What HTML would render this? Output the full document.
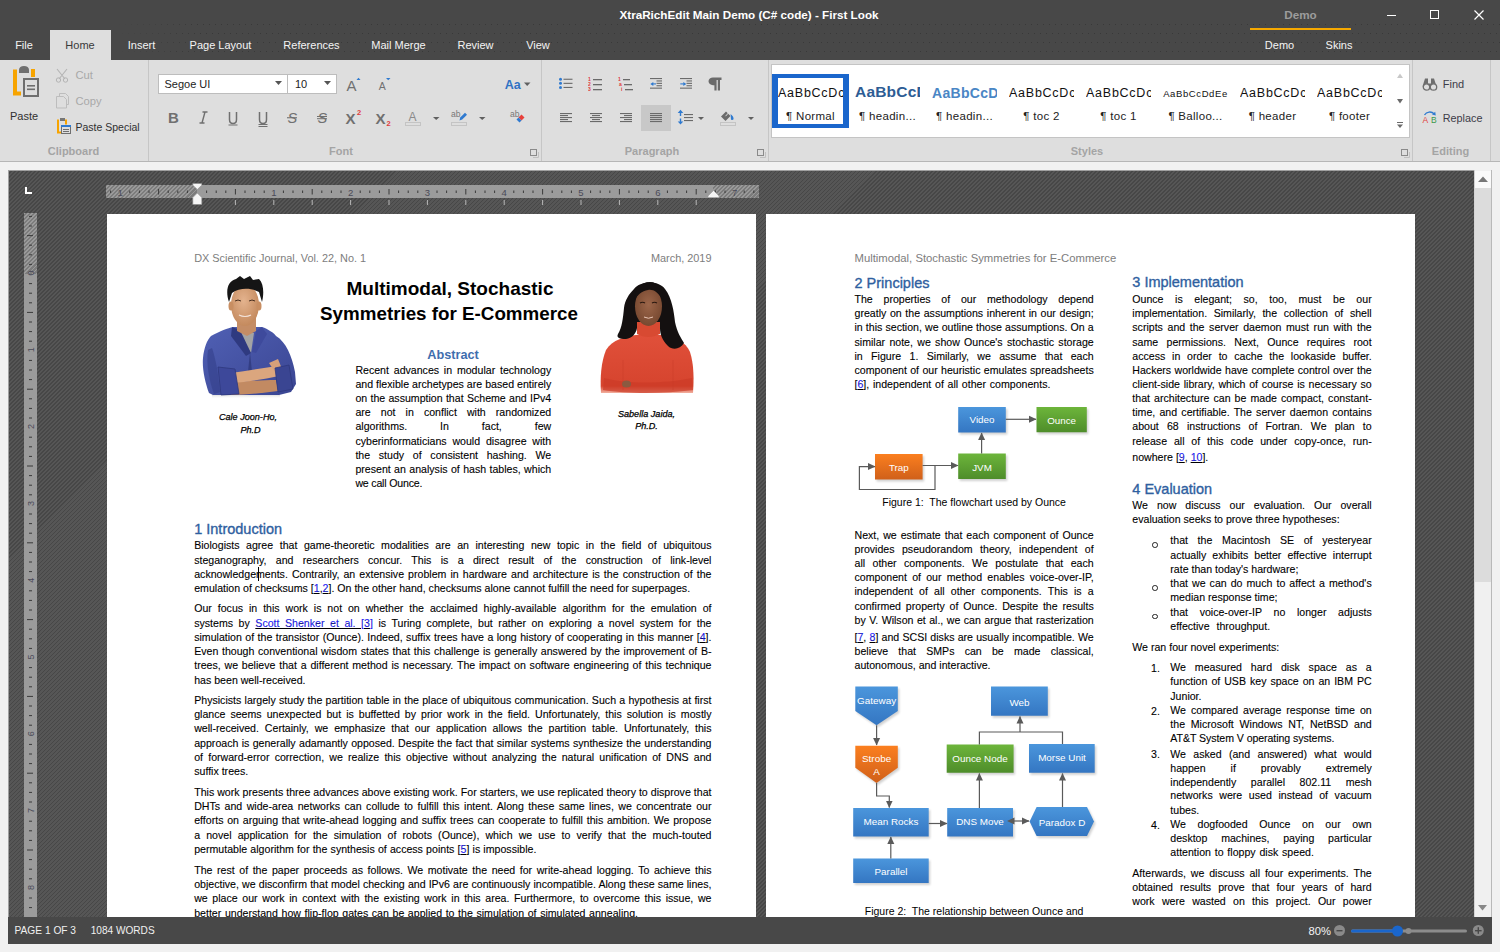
<!DOCTYPE html>
<html><head><meta charset="utf-8"><style>
    html,body{margin:0;padding:0;width:1500px;height:952px;overflow:hidden;background:#f1f1f1}
    .abs{position:absolute}
    .t{font-family:"Liberation Sans",sans-serif;white-space:nowrap}
    .d{white-space:nowrap;-webkit-text-stroke:0.1px #000}
    .lk{color:#1a1aff;text-decoration:underline}
    text{font-family:"Liberation Sans",sans-serif}
    </style></head><body>
<div class="abs" style="left:0;top:0;width:1500px;height:60px;background:#484848"></div>
<div class="abs t" style="left:0.00px;top:9.10px;font-size:11.7px;line-height:11.7px;color:#fff;font-weight:bold;width:1498.00px;text-align:center;">XtraRichEdit Main Demo (C# code) - First Look</div>
<div class="abs t" style="left:1250.00px;top:9.10px;font-size:11.7px;line-height:11.7px;color:#9c9c9c;font-weight:bold;width:101.00px;text-align:center;">Demo</div>
<div class="abs" style="left:1250px;top:28px;width:101px;height:2px;background:#f5a800"></div>
<div class="abs" style="left:1387px;top:15px;width:9px;height:1px;background:#fff"></div>
<div class="abs" style="left:1430px;top:10px;width:7px;height:7px;border:1px solid #fff"></div>
<svg class="abs" style="left:1474px;top:10px" width="10" height="10"><path d="M0.5 0.5L9.5 9.5M9.5 0.5L0.5 9.5" stroke="#fff" stroke-width="1.2"/></svg>
<svg class="abs" style="left:0;top:0" width="1500" height="60"><defs><pattern id="dots" x="2" y="15" width="6" height="18" patternUnits="userSpaceOnUse"><rect x="0" y="0" width="1" height="1" fill="#393939"/><rect x="3" y="9" width="1" height="1" fill="#393939"/></pattern><linearGradient id="dfade" x1="0" y1="0" x2="1" y2="0"><stop offset="0" stop-color="#fff" stop-opacity="0"/><stop offset="0.06" stop-color="#fff" stop-opacity="1"/></linearGradient><mask id="dmask"><rect x="115" y="24" width="1385" height="36" fill="url(#dfade)"/></mask></defs><rect x="115" y="24" width="1385" height="36" fill="url(#dots)" mask="url(#dmask)"/></svg>
<div class="abs" style="left:50px;top:30px;width:61px;height:31px;background:#dedede"></div>
<div class="abs t" style="left:-36.00px;top:40.19px;font-size:11px;line-height:11px;color:#f4f4f4;width:120.00px;text-align:center;">File</div>
<div class="abs t" style="left:20.00px;top:40.19px;font-size:11px;line-height:11px;color:#3a3a3a;width:120.00px;text-align:center;">Home</div>
<div class="abs t" style="left:81.50px;top:40.19px;font-size:11px;line-height:11px;color:#f4f4f4;width:120.00px;text-align:center;">Insert</div>
<div class="abs t" style="left:160.50px;top:40.19px;font-size:11px;line-height:11px;color:#f4f4f4;width:120.00px;text-align:center;">Page Layout</div>
<div class="abs t" style="left:251.50px;top:40.19px;font-size:11px;line-height:11px;color:#f4f4f4;width:120.00px;text-align:center;">References</div>
<div class="abs t" style="left:338.50px;top:40.19px;font-size:11px;line-height:11px;color:#f4f4f4;width:120.00px;text-align:center;">Mail Merge</div>
<div class="abs t" style="left:415.50px;top:40.19px;font-size:11px;line-height:11px;color:#f4f4f4;width:120.00px;text-align:center;">Review</div>
<div class="abs t" style="left:478.00px;top:40.19px;font-size:11px;line-height:11px;color:#f4f4f4;width:120.00px;text-align:center;">View</div>
<div class="abs t" style="left:1219.50px;top:40.19px;font-size:11px;line-height:11px;color:#f4f4f4;width:120.00px;text-align:center;">Demo</div>
<div class="abs t" style="left:1279.00px;top:40.19px;font-size:11px;line-height:11px;color:#f4f4f4;width:120.00px;text-align:center;">Skins</div>
<div class="abs" style="left:0;top:60px;width:1500px;height:101px;background:#dedede;border-bottom:1px solid #b6b6b6"></div>
<div class="abs" style="left:148px;top:60px;width:1px;height:101px;background:#c6c6c6"></div>
<div class="abs" style="left:541px;top:60px;width:1px;height:101px;background:#c6c6c6"></div>
<div class="abs" style="left:768px;top:60px;width:1px;height:101px;background:#c6c6c6"></div>
<div class="abs" style="left:1412px;top:60px;width:1px;height:101px;background:#c6c6c6"></div>
<div class="abs" style="left:1490px;top:60px;width:1px;height:101px;background:#c6c6c6"></div>
<div class="abs t" style="left:13.50px;top:145.69px;font-size:11px;line-height:11px;color:#a4a4a4;font-weight:bold;width:120.00px;text-align:center;">Clipboard</div>
<div class="abs t" style="left:281.00px;top:145.69px;font-size:11px;line-height:11px;color:#a4a4a4;font-weight:bold;width:120.00px;text-align:center;">Font</div>
<div class="abs t" style="left:592.00px;top:145.69px;font-size:11px;line-height:11px;color:#a4a4a4;font-weight:bold;width:120.00px;text-align:center;">Paragraph</div>
<div class="abs t" style="left:1027.00px;top:145.69px;font-size:11px;line-height:11px;color:#a4a4a4;font-weight:bold;width:120.00px;text-align:center;">Styles</div>
<div class="abs t" style="left:1390.50px;top:145.69px;font-size:11px;line-height:11px;color:#a4a4a4;font-weight:bold;width:120.00px;text-align:center;">Editing</div>
<svg class="abs" style="left:530px;top:148.5px" width="9" height="9"><rect x="0.5" y="0.5" width="6" height="6" fill="none" stroke="#8a8a8a"/><path d="M8.5 3V8.5H3" fill="none" stroke="#c0c0c0"/></svg>
<svg class="abs" style="left:757px;top:148.5px" width="9" height="9"><rect x="0.5" y="0.5" width="6" height="6" fill="none" stroke="#8a8a8a"/><path d="M8.5 3V8.5H3" fill="none" stroke="#c0c0c0"/></svg>
<svg class="abs" style="left:1401px;top:148.5px" width="9" height="9"><rect x="0.5" y="0.5" width="6" height="6" fill="none" stroke="#8a8a8a"/><path d="M8.5 3V8.5H3" fill="none" stroke="#c0c0c0"/></svg>
<svg class="abs" style="left:10px;top:64px" width="32" height="36">
      <path d="M3 5.5h4v22h4v4H3z" fill="#f7a400"/>
      <rect x="21" y="5" width="4" height="8" fill="#f7a400"/>
      <path d="M9 9V6C9 3.5 11 2 14 2C17 2 19 3.5 19 6V9z" fill="#6f6f6f"/>
      <rect x="14" y="15" width="14" height="17" fill="none" stroke="#6f6f6f" stroke-width="2"/>
      <rect x="17" y="21" width="8" height="1.6" fill="#6f6f6f"/><rect x="17" y="24.5" width="8" height="1.6" fill="#6f6f6f"/>
    </svg>
<div class="abs t" style="left:0.00px;top:111.19px;font-size:11px;line-height:11px;color:#303030;width:48.00px;text-align:center;">Paste</div>
<svg class="abs" style="left:55px;top:68px" width="15" height="15">
      <path d="M2 1L10 11M12 1L4 11" stroke="#b4b4b4" stroke-width="1.1" fill="none"/>
      <circle cx="3.5" cy="12" r="2.2" fill="none" stroke="#b4b4b4"/><circle cx="10.5" cy="12" r="2.2" fill="none" stroke="#b4b4b4"/></svg>
<div class="abs t" style="left:75.50px;top:69.52px;font-size:11.2px;line-height:11.2px;color:#a9a9a9;">Cut</div>
<svg class="abs" style="left:55px;top:92px" width="15" height="17">
      <path d="M1.5 4.5h7l3 3v8.5h-10z" fill="none" stroke="#bdbdbd"/><path d="M4.5 4.5v-3h6l3 3v8h-2" fill="none" stroke="#bdbdbd"/></svg>
<div class="abs t" style="left:75.50px;top:95.52px;font-size:11.2px;line-height:11.2px;color:#a9a9a9;">Copy</div>
<svg class="abs" style="left:56px;top:118px" width="16" height="17">
      <path d="M1 1.5h2v12h3v2H1z" fill="#f7a400"/><rect x="9" y="1.5" width="2" height="5" fill="#f7a400"/>
      <rect x="4" y="0" width="5" height="3" fill="#777"/>
      <rect x="5.5" y="7.5" width="9" height="8" fill="none" stroke="#6f6f6f"/><rect x="5" y="7" width="10" height="2" fill="#2f7ad0"/>
      <rect x="7" y="11" width="6" height="1" fill="#6f6f6f"/><rect x="7" y="13" width="6" height="1" fill="#6f6f6f"/></svg>
<div class="abs t" style="left:75.50px;top:121.81px;font-size:10.5px;line-height:10.5px;color:#303030;">Paste Special</div>
<div class="abs" style="left:158px;top:74px;width:128px;height:18px;background:#fff;border:1px solid #bdbdbd"></div>
<div class="abs" style="left:287px;top:74px;width:48px;height:18px;background:#fff;border:1px solid #bdbdbd"></div>
<div class="abs t" style="left:164.50px;top:78.69px;font-size:11px;line-height:11px;color:#222;">Segoe UI</div>
<div class="abs t" style="left:295.00px;top:78.69px;font-size:11px;line-height:11px;color:#222;">10</div>
<svg class="abs" style="left:275px;top:81px" width="8" height="5"><path d="M0 0h7l-3.5 4z" fill="#555"/></svg>
<svg class="abs" style="left:324px;top:81px" width="8" height="5"><path d="M0 0h7l-3.5 4z" fill="#555"/></svg>
<svg class="abs" style="left:0;top:0" width="545" height="135">
      <text x="346.5" y="90.5" font-size="15" fill="#707070" font-family="Liberation Sans">A</text>
      <path d="M356.5 80L358.5 77.8L360.5 80z" fill="#2f7ad0"/>
      <text x="378.8" y="90.3" font-size="10.5" fill="#707070" font-family="Liberation Sans">A</text>
      <path d="M386 78H390.5L388.2 80.2z" fill="#2f7ad0"/>
      <text x="504.8" y="88.5" font-size="12.5" font-weight="bold" fill="#2f72c4" font-family="Liberation Sans">Aa</text>
      <path d="M524 82.5H530.5L527.2 86z" fill="#606060"/>
    </svg>
<svg class="abs" style="left:160px;top:105px" width="180" height="25">
      <text x="8" y="18" font-size="15" font-weight="bold" fill="#707070" font-family="Liberation Sans">B</text>
      <path d="M42.5 7H47.5M39.5 18H44.5M45 7L42 18" stroke="#707070" stroke-width="1.4" fill="none"/>
      <path d="M69.5 7V14.5C69.5 17.5 71 18.5 73 18.5C75 18.5 76.5 17.5 76.5 14.5V7" stroke="#707070" stroke-width="1.5" fill="none"/>
      <rect x="68.5" y="19.5" width="9" height="1" fill="#707070"/>
      <path d="M99.5 7V14.5C99.5 17.5 101 18.5 103 18.5C105 18.5 106.5 17.5 106.5 14.5V7" stroke="#707070" stroke-width="1.5" fill="none"/>
      <rect x="98.5" y="19" width="9" height="1" fill="#707070"/><rect x="98.5" y="21" width="9" height="1" fill="#707070"/>
      <text x="127.5" y="18" font-size="14.5" fill="#707070" font-family="Liberation Sans" font-style="italic">S</text>
      <rect x="127" y="12.2" width="10" height="1.1" fill="#707070"/>
      <text x="157.5" y="18" font-size="14.5" fill="#707070" font-family="Liberation Sans" font-style="italic">S</text>
      <rect x="157" y="11" width="10" height="1" fill="#707070"/><rect x="157" y="13.2" width="10" height="1" fill="#707070"/>
    </svg>
<svg class="abs" style="left:0;top:0" width="545" height="135">
      <text x="345.5" y="123.5" font-size="15" font-weight="bold" fill="#707070" font-family="Liberation Sans">X</text>
      <text x="357" y="115.3" font-size="7.5" font-weight="bold" fill="#e03a3a" font-family="Liberation Sans">2</text>
      <text x="375.5" y="123.5" font-size="15" font-weight="bold" fill="#707070" font-family="Liberation Sans">X</text>
      <text x="386.5" y="126.3" font-size="7.5" font-weight="bold" fill="#e03a3a" font-family="Liberation Sans">2</text>
      <text x="408.5" y="121" font-size="12" fill="#8a8a8a" font-family="Liberation Sans">A</text>
      <rect x="405.5" y="122.5" width="15" height="3" fill="none" stroke="#c4c4c4"/>
      <path d="M433 117H439.5L436.2 120z" fill="#606060"/>
      <text x="451" y="116.5" font-size="8.5" fill="#777" font-family="Liberation Sans">ab</text>
      <path d="M459.5 120.5L460.2 117.5L465 112.7L467 114.7L462.2 119.5z" fill="#2f7ad0"/>
      <rect x="451.5" y="122.5" width="15" height="3" fill="none" stroke="#c4c4c4"/>
      <path d="M479 117H485.5L482.2 120z" fill="#606060"/>
      <text x="510" y="116.5" font-size="8.5" fill="#777" font-family="Liberation Sans">ab</text>
      <path d="M521.5 114.5L524.5 117.5L521.5 120.5L518.5 117.5z" fill="#e8403a"/>
      <path d="M518.5 117.5L521.5 120.5L519.5 122.5L516.5 119.5z" fill="#2f7ad0"/>
    </svg>
<svg class="abs" style="left:558px;top:77px" width="16" height="14">
      <circle cx="2.5" cy="2.2" r="1.5" fill="#2f7ad0"/><circle cx="2.5" cy="6.3" r="1.5" fill="#2f7ad0"/><circle cx="2.5" cy="10.4" r="1.5" fill="#2f7ad0"/>
      <rect x="5.5" y="1.7" width="9" height="1.1" fill="#6a6a6a"/><rect x="5.5" y="5.8" width="9" height="1.1" fill="#6a6a6a"/><rect x="5.5" y="9.9" width="9" height="1.1" fill="#6a6a6a"/></svg>
<svg class="abs" style="left:588px;top:76px" width="16" height="15">
      <text x="0" y="5" font-size="5" font-weight="bold" fill="#e03a3a" font-family="Liberation Sans">1</text><text x="0" y="10" font-size="5" font-weight="bold" fill="#e03a3a" font-family="Liberation Sans">2</text><text x="0" y="15" font-size="5" font-weight="bold" fill="#e03a3a" font-family="Liberation Sans">3</text>
      <rect x="5" y="3" width="9" height="1.3" fill="#6a6a6a"/><rect x="5" y="8" width="9" height="1.3" fill="#6a6a6a"/><rect x="5" y="13" width="9" height="1.3" fill="#6a6a6a"/></svg>
<svg class="abs" style="left:618px;top:76px" width="16" height="15">
      <text x="0" y="5" font-size="5" font-weight="bold" fill="#e03a3a" font-family="Liberation Sans">1</text><text x="1" y="10" font-size="5" font-weight="bold" fill="#e03a3a" font-family="Liberation Sans">a</text><text x="3" y="15" font-size="5" font-weight="bold" fill="#e03a3a" font-family="Liberation Sans">i</text>
      <rect x="5" y="3" width="7" height="1.3" fill="#6a6a6a"/><rect x="6" y="8" width="8" height="1.3" fill="#6a6a6a"/><rect x="7" y="13" width="8" height="1.3" fill="#6a6a6a"/></svg>
<svg class="abs" style="left:650px;top:78px" width="13" height="12">
          <rect x="0" y="0" width="12" height="1.1" fill="#6a6a6a"/><rect x="6.5" y="2.4" width="5.5" height="1.1" fill="#6a6a6a"/><rect x="6.5" y="4.8" width="5.5" height="1.1" fill="#6a6a6a"/><rect x="6.5" y="7.2" width="5.5" height="1.1" fill="#6a6a6a"/><rect x="0" y="9.6" width="12" height="1.1" fill="#6a6a6a"/><path d="M0.3 5.9L3.3 3.9V7.9z" fill="#2f7ad0"/><rect x="2.5" y="5.35" width="3.5" height="1.1" fill="#2f7ad0"/></svg>
<svg class="abs" style="left:680px;top:78px" width="13" height="12">
          <rect x="0" y="0" width="12" height="1.1" fill="#6a6a6a"/><rect x="6.5" y="2.4" width="5.5" height="1.1" fill="#6a6a6a"/><rect x="6.5" y="4.8" width="5.5" height="1.1" fill="#6a6a6a"/><rect x="6.5" y="7.2" width="5.5" height="1.1" fill="#6a6a6a"/><rect x="0" y="9.6" width="12" height="1.1" fill="#6a6a6a"/><path d="M6.3 5.9L3.3 3.9V7.9z" fill="#2f7ad0"/><rect x="0.3" y="5.35" width="3.5" height="1.1" fill="#2f7ad0"/></svg>
<svg class="abs" style="left:708px;top:77px" width="14" height="14"><path d="M5 0.5H13.5V3H12V13.5H9.8V3H8.6V13.5H6.4V8.2H5C2.6 8.2 0.5 6.6 0.5 4.3C0.5 2 2.6 0.5 5 0.5z" fill="#6a6a6a"/></svg>
<div class="abs" style="left:641px;top:105px;width:30px;height:26px;background:#c8c8c8"></div>
<svg class="abs" style="left:560px;top:113px" width="13" height="10"><rect x="0" y="0" width="12" height="1.1" fill="#6a6a6a"/><rect x="0" y="2" width="8" height="1.1" fill="#6a6a6a"/><rect x="0" y="4" width="12" height="1.1" fill="#6a6a6a"/><rect x="0" y="6" width="8" height="1.1" fill="#6a6a6a"/><rect x="0" y="8" width="12" height="1.1" fill="#6a6a6a"/></svg>
<svg class="abs" style="left:590px;top:113px" width="13" height="10"><rect x="0.0" y="0" width="12" height="1.1" fill="#6a6a6a"/><rect x="2.0" y="2" width="8" height="1.1" fill="#6a6a6a"/><rect x="0.0" y="4" width="12" height="1.1" fill="#6a6a6a"/><rect x="2.0" y="6" width="8" height="1.1" fill="#6a6a6a"/><rect x="0.0" y="8" width="12" height="1.1" fill="#6a6a6a"/></svg>
<svg class="abs" style="left:620px;top:113px" width="13" height="10"><rect x="0" y="0" width="12" height="1.1" fill="#6a6a6a"/><rect x="4" y="2" width="8" height="1.1" fill="#6a6a6a"/><rect x="0" y="4" width="12" height="1.1" fill="#6a6a6a"/><rect x="4" y="6" width="8" height="1.1" fill="#6a6a6a"/><rect x="0" y="8" width="12" height="1.1" fill="#6a6a6a"/></svg>
<svg class="abs" style="left:650px;top:113px" width="13" height="10"><rect x="0" y="0" width="12" height="1.1" fill="#6a6a6a"/><rect x="0" y="2" width="12" height="1.1" fill="#6a6a6a"/><rect x="0" y="4" width="12" height="1.1" fill="#6a6a6a"/><rect x="0" y="6" width="12" height="1.1" fill="#6a6a6a"/><rect x="0" y="8" width="12" height="1.1" fill="#6a6a6a"/></svg>
<svg class="abs" style="left:0;top:0" width="770" height="135">
      <path d="M680.5 109.8L683.3 113H681.2V116H679.8V113H677.7z" fill="#2f7ad0"/>
      <path d="M680.5 124.6L683.3 121.4H681.2V118.4H679.8V121.4H677.7z" fill="#2f7ad0"/>
      <rect x="684" y="114" width="9" height="1.1" fill="#6a6a6a"/><rect x="684" y="117" width="9" height="1.1" fill="#6a6a6a"/><rect x="684" y="120" width="9" height="1.1" fill="#6a6a6a"/>
      <path d="M698 117H704L701 120z" fill="#606060"/>
      <path d="M721 116.5L726 111.5L730.5 116L725.5 121z" fill="#6a6a6a"/>
      <path d="M725.5 116.2L729.5 111.8" stroke="#dedede" stroke-width="1"/>
      <path d="M730.5 114C732.5 115.5 734 117.5 733.5 119.3C733 120.3 731.3 120.3 731 119.2C730.7 117.8 731 116 730.5 114z" fill="#2f7ad0"/>
      <rect x="720.5" y="122.5" width="15" height="3" fill="none" stroke="#c4c4c4"/>
      <path d="M748 117H754L751 120z" fill="#606060"/>
    </svg>
<div class="abs" style="left:771px;top:64px;width:637px;height:72px;background:#fff;border:1px solid #c4c4c4"></div>
<div class="abs" style="left:772px;top:74px;width:65px;height:46px;border-style:solid;border-color:#1a66cc;border-width:4px 6px 4px 6px"></div>
<div class="abs" style="left:778px;top:76px;width:65px;height:30px;overflow:hidden"><div class="abs t" style="left:0.00px;top:11.42px;font-size:12.5px;line-height:12.5px;color:#111;letter-spacing:0.75px;">AaBbCcDc</div></div>
<div class="abs t" style="left:762.00px;top:110.77px;font-size:11.5px;line-height:11.5px;color:#222;width:97.00px;text-align:center;letter-spacing:0.3px;white-space:pre;">¶ Normal</div>
<div class="abs" style="left:855px;top:76px;width:65px;height:30px;overflow:hidden"><div class="abs t" style="left:0.00px;top:8.38px;font-size:15.5px;line-height:15.5px;color:#2d5c94;font-weight:bold;letter-spacing:0.2px;">AaBbCcDd</div></div>
<div class="abs t" style="left:839.00px;top:110.77px;font-size:11.5px;line-height:11.5px;color:#222;width:97.00px;text-align:center;letter-spacing:0.3px;white-space:pre;">¶ headin...</div>
<div class="abs" style="left:932px;top:76px;width:65px;height:30px;overflow:hidden"><div class="abs t" style="left:0.00px;top:9.65px;font-size:14px;line-height:14px;color:#4a86c5;font-weight:bold;letter-spacing:0.3px;">AaBbCcDd</div></div>
<div class="abs t" style="left:916.00px;top:110.77px;font-size:11.5px;line-height:11.5px;color:#222;width:97.00px;text-align:center;letter-spacing:0.3px;white-space:pre;">¶ headin...</div>
<div class="abs" style="left:1009px;top:76px;width:65px;height:30px;overflow:hidden"><div class="abs t" style="left:0.00px;top:11.42px;font-size:12.5px;line-height:12.5px;color:#111;letter-spacing:0.75px;">AaBbCcDc</div></div>
<div class="abs t" style="left:993.00px;top:110.77px;font-size:11.5px;line-height:11.5px;color:#222;width:97.00px;text-align:center;letter-spacing:0.3px;white-space:pre;">¶ toc 2</div>
<div class="abs" style="left:1086px;top:76px;width:65px;height:30px;overflow:hidden"><div class="abs t" style="left:0.00px;top:11.42px;font-size:12.5px;line-height:12.5px;color:#111;letter-spacing:0.75px;">AaBbCcDc</div></div>
<div class="abs t" style="left:1070.00px;top:110.77px;font-size:11.5px;line-height:11.5px;color:#222;width:97.00px;text-align:center;letter-spacing:0.3px;white-space:pre;">¶ toc 1</div>
<div class="abs" style="left:1157px;top:76px;width:77px;height:30px;overflow:hidden"><div class="abs t" style="left:0.00px;top:12.96px;font-size:9.5px;line-height:9.5px;color:#111;width:77.00px;text-align:center;letter-spacing:0.6px;">AaBbCcDdEe</div></div>
<div class="abs t" style="left:1147.00px;top:110.77px;font-size:11.5px;line-height:11.5px;color:#222;width:97.00px;text-align:center;letter-spacing:0.3px;white-space:pre;">¶ Balloo...</div>
<div class="abs" style="left:1240px;top:76px;width:65px;height:30px;overflow:hidden"><div class="abs t" style="left:0.00px;top:11.42px;font-size:12.5px;line-height:12.5px;color:#111;letter-spacing:0.75px;">AaBbCcDc</div></div>
<div class="abs t" style="left:1224.00px;top:110.77px;font-size:11.5px;line-height:11.5px;color:#222;width:97.00px;text-align:center;letter-spacing:0.3px;white-space:pre;">¶ header</div>
<div class="abs" style="left:1317px;top:76px;width:65px;height:30px;overflow:hidden"><div class="abs t" style="left:0.00px;top:11.42px;font-size:12.5px;line-height:12.5px;color:#111;letter-spacing:0.75px;">AaBbCcDc</div></div>
<div class="abs t" style="left:1301.00px;top:110.77px;font-size:11.5px;line-height:11.5px;color:#222;width:97.00px;text-align:center;letter-spacing:0.3px;white-space:pre;">¶ footer</div>
<svg class="abs" style="left:1396px;top:72.5px" width="8" height="60"><path d="M1 5L4 0.5L7 5z" fill="#c8c8c8"/><path d="M1 26h6L4 30.5z" fill="#6a6a6a"/><rect x="1" y="49" width="6" height="1" fill="#6a6a6a"/><path d="M1 51.5h6L4 55z" fill="#6a6a6a"/></svg>
<svg class="abs" style="left:1422px;top:77px" width="16" height="14">
      <path d="M3 1.5h3v5h3v-5h3l2.5 8h-14z" fill="#6e6e6e"/>
      <circle cx="4.5" cy="10" r="3.2" fill="#dedede" stroke="#6e6e6e" stroke-width="1.3"/><circle cx="11.5" cy="10" r="3.2" fill="#dedede" stroke="#6e6e6e" stroke-width="1.3"/></svg>
<div class="abs t" style="left:1442.80px;top:78.69px;font-size:11px;line-height:11px;color:#3c3c48;">Find</div>
<svg class="abs" style="left:1422px;top:110px" width="16" height="15">
      <text x="0.5" y="13" font-size="8.5" fill="#e04040" font-family="Liberation Sans">A</text>
      <text x="9" y="13" font-size="8.5" fill="#3a9a4a" font-family="Liberation Sans">B</text>
      <path d="M2.5 5C4.5 1.5 9.5 1 12 3.8" stroke="#2f7ad0" stroke-width="1.3" fill="none"/><path d="M10 4.5L13.8 5.5L13.2 1.8z" fill="#2f7ad0"/></svg>
<div class="abs t" style="left:1442.80px;top:112.86px;font-size:10.8px;line-height:10.8px;color:#3c3c48;">Replace</div>
<div class="abs" style="left:8px;top:170px;width:1466px;height:747px;background:#a0a0a0"></div>
<div class="abs" style="left:9px;top:171px;width:1465px;height:746px;background-color:#4c4c4c;background-image:repeating-linear-gradient(-45deg,#565656 0px,#565656 1.6px,#474747 1.6px,#474747 2.83px);"></div>
<svg class="abs" style="left:25px;top:187px" width="8" height="8"><path d="M1 0V6H7" stroke="#fff" stroke-width="2" fill="none"/></svg>
<div class="abs" style="left:197px;top:185px;width:516px;height:13px;background:#9b9b9b"></div>
<div class="abs" style="left:106px;top:185px;width:91px;height:13px;background-color:#8a8a8a;background-image:repeating-linear-gradient(-45deg,#9a9a9a 0px,#9a9a9a 1.41px,#7c7c7c 1.41px,#7c7c7c 2.83px);"></div>
<div class="abs" style="left:713px;top:185px;width:46px;height:13px;background-color:#8a8a8a;background-image:repeating-linear-gradient(-45deg,#9a9a9a 0px,#9a9a9a 1.41px,#7c7c7c 1.41px,#7c7c7c 2.83px);"></div>
<svg class="abs" style="left:0;top:185px" width="1500" height="13"><rect x="110.1" y="5.5" width="1" height="2.5" fill="#3a3a3a"/><text x="120.2" y="10.5" font-size="9.5" fill="#4a4a58" text-anchor="middle" font-family="Liberation Sans">1</text><rect x="129.3" y="5.5" width="1" height="2.5" fill="#3a3a3a"/><rect x="138.9" y="5.5" width="1" height="2.5" fill="#3a3a3a"/><rect x="148.5" y="5.5" width="1" height="2.5" fill="#3a3a3a"/><rect x="158.1" y="4" width="1" height="5.5" fill="#3a3a3a"/><rect x="167.7" y="5.5" width="1" height="2.5" fill="#3a3a3a"/><rect x="177.3" y="5.5" width="1" height="2.5" fill="#3a3a3a"/><rect x="186.9" y="5.5" width="1" height="2.5" fill="#3a3a3a"/><rect x="206.1" y="5.5" width="1" height="2.5" fill="#3a3a3a"/><rect x="215.7" y="5.5" width="1" height="2.5" fill="#3a3a3a"/><rect x="225.3" y="5.5" width="1" height="2.5" fill="#3a3a3a"/><rect x="234.9" y="4" width="1" height="5.5" fill="#3a3a3a"/><rect x="244.5" y="5.5" width="1" height="2.5" fill="#3a3a3a"/><rect x="254.1" y="5.5" width="1" height="2.5" fill="#3a3a3a"/><rect x="263.7" y="5.5" width="1" height="2.5" fill="#3a3a3a"/><text x="273.8" y="10.5" font-size="9.5" fill="#4a4a58" text-anchor="middle" font-family="Liberation Sans">1</text><rect x="282.9" y="5.5" width="1" height="2.5" fill="#3a3a3a"/><rect x="292.5" y="5.5" width="1" height="2.5" fill="#3a3a3a"/><rect x="302.1" y="5.5" width="1" height="2.5" fill="#3a3a3a"/><rect x="311.7" y="4" width="1" height="5.5" fill="#3a3a3a"/><rect x="321.3" y="5.5" width="1" height="2.5" fill="#3a3a3a"/><rect x="330.9" y="5.5" width="1" height="2.5" fill="#3a3a3a"/><rect x="340.5" y="5.5" width="1" height="2.5" fill="#3a3a3a"/><text x="350.6" y="10.5" font-size="9.5" fill="#4a4a58" text-anchor="middle" font-family="Liberation Sans">2</text><rect x="359.7" y="5.5" width="1" height="2.5" fill="#3a3a3a"/><rect x="369.3" y="5.5" width="1" height="2.5" fill="#3a3a3a"/><rect x="378.9" y="5.5" width="1" height="2.5" fill="#3a3a3a"/><rect x="388.5" y="4" width="1" height="5.5" fill="#3a3a3a"/><rect x="398.1" y="5.5" width="1" height="2.5" fill="#3a3a3a"/><rect x="407.7" y="5.5" width="1" height="2.5" fill="#3a3a3a"/><rect x="417.3" y="5.5" width="1" height="2.5" fill="#3a3a3a"/><text x="427.4" y="10.5" font-size="9.5" fill="#4a4a58" text-anchor="middle" font-family="Liberation Sans">3</text><rect x="436.5" y="5.5" width="1" height="2.5" fill="#3a3a3a"/><rect x="446.1" y="5.5" width="1" height="2.5" fill="#3a3a3a"/><rect x="455.7" y="5.5" width="1" height="2.5" fill="#3a3a3a"/><rect x="465.3" y="4" width="1" height="5.5" fill="#3a3a3a"/><rect x="474.9" y="5.5" width="1" height="2.5" fill="#3a3a3a"/><rect x="484.5" y="5.5" width="1" height="2.5" fill="#3a3a3a"/><rect x="494.1" y="5.5" width="1" height="2.5" fill="#3a3a3a"/><text x="504.2" y="10.5" font-size="9.5" fill="#4a4a58" text-anchor="middle" font-family="Liberation Sans">4</text><rect x="513.3" y="5.5" width="1" height="2.5" fill="#3a3a3a"/><rect x="522.9" y="5.5" width="1" height="2.5" fill="#3a3a3a"/><rect x="532.5" y="5.5" width="1" height="2.5" fill="#3a3a3a"/><rect x="542.1" y="4" width="1" height="5.5" fill="#3a3a3a"/><rect x="551.7" y="5.5" width="1" height="2.5" fill="#3a3a3a"/><rect x="561.3" y="5.5" width="1" height="2.5" fill="#3a3a3a"/><rect x="570.9" y="5.5" width="1" height="2.5" fill="#3a3a3a"/><text x="581.0" y="10.5" font-size="9.5" fill="#4a4a58" text-anchor="middle" font-family="Liberation Sans">5</text><rect x="590.1" y="5.5" width="1" height="2.5" fill="#3a3a3a"/><rect x="599.7" y="5.5" width="1" height="2.5" fill="#3a3a3a"/><rect x="609.3" y="5.5" width="1" height="2.5" fill="#3a3a3a"/><rect x="618.9" y="4" width="1" height="5.5" fill="#3a3a3a"/><rect x="628.5" y="5.5" width="1" height="2.5" fill="#3a3a3a"/><rect x="638.1" y="5.5" width="1" height="2.5" fill="#3a3a3a"/><rect x="647.7" y="5.5" width="1" height="2.5" fill="#3a3a3a"/><text x="657.8" y="10.5" font-size="9.5" fill="#4a4a58" text-anchor="middle" font-family="Liberation Sans">6</text><rect x="666.9" y="5.5" width="1" height="2.5" fill="#3a3a3a"/><rect x="676.5" y="5.5" width="1" height="2.5" fill="#3a3a3a"/><rect x="686.1" y="5.5" width="1" height="2.5" fill="#3a3a3a"/><rect x="695.7" y="4" width="1" height="5.5" fill="#3a3a3a"/><rect x="705.3" y="5.5" width="1" height="2.5" fill="#3a3a3a"/><rect x="714.9" y="5.5" width="1" height="2.5" fill="#3a3a3a"/><rect x="724.5" y="5.5" width="1" height="2.5" fill="#3a3a3a"/><text x="734.6" y="10.5" font-size="9.5" fill="#4a4a58" text-anchor="middle" font-family="Liberation Sans">7</text><rect x="743.7" y="5.5" width="1" height="2.5" fill="#3a3a3a"/><rect x="753.3" y="5.5" width="1" height="2.5" fill="#3a3a3a"/></svg>
<svg class="abs" style="left:0;top:200px" width="1500" height="6"><rect x="234.9" y="0" width="1" height="5" fill="#b8b8b8"/><rect x="273.3" y="0" width="1" height="5" fill="#b8b8b8"/><rect x="311.7" y="0" width="1" height="5" fill="#b8b8b8"/><rect x="350.1" y="0" width="1" height="5" fill="#b8b8b8"/><rect x="388.5" y="0" width="1" height="5" fill="#b8b8b8"/><rect x="426.9" y="0" width="1" height="5" fill="#b8b8b8"/><rect x="465.3" y="0" width="1" height="5" fill="#b8b8b8"/><rect x="503.7" y="0" width="1" height="5" fill="#b8b8b8"/><rect x="542.1" y="0" width="1" height="5" fill="#b8b8b8"/><rect x="580.5" y="0" width="1" height="5" fill="#b8b8b8"/><rect x="618.9" y="0" width="1" height="5" fill="#b8b8b8"/><rect x="657.3" y="0" width="1" height="5" fill="#b8b8b8"/><rect x="695.7" y="0" width="1" height="5" fill="#b8b8b8"/></svg>
<svg class="abs" style="left:192px;top:182.5px" width="11" height="23"><path d="M0.8 0.5H9.8V2.2L5.3 6.5L0.8 2.2z" fill="#f6f6f6" stroke="#8a8a8a" stroke-width="0.6"/><path d="M5.3 10L9.8 14.5V21.5H0.8V14.5z" fill="#f6f6f6" stroke="#8a8a8a" stroke-width="0.6"/></svg>
<svg class="abs" style="left:707px;top:190px" width="13" height="8"><path d="M6.5 0.5L12 6V7.5H1V6z" fill="#f4f4f4" stroke="#9a9a9a" stroke-width="0.6"/></svg>
<div class="abs" style="left:24px;top:274px;width:13px;height:643px;background:#9b9b9b"></div>
<div class="abs" style="left:24px;top:213px;width:13px;height:61px;background-color:#8a8a8a;background-image:repeating-linear-gradient(-45deg,#9a9a9a 0px,#9a9a9a 1.41px,#7c7c7c 1.41px,#7c7c7c 2.83px);"></div>
<svg class="abs" style="left:24px;top:0" width="13" height="917"><rect x="5" y="215.9" width="3" height="1" fill="#3a3a3a"/><rect x="5" y="225.5" width="3" height="1" fill="#3a3a3a"/><rect x="3" y="235.1" width="6" height="1" fill="#3a3a3a"/><rect x="5" y="244.7" width="3" height="1" fill="#3a3a3a"/><rect x="5" y="254.3" width="3" height="1" fill="#3a3a3a"/><rect x="5" y="263.9" width="3" height="1" fill="#3a3a3a"/><text x="0" y="0" transform="translate(10.2,273.0) rotate(-90)" font-size="9" fill="#4a4a58" text-anchor="middle" font-family="Liberation Sans">0</text><rect x="5" y="283.1" width="3" height="1" fill="#3a3a3a"/><rect x="5" y="292.7" width="3" height="1" fill="#3a3a3a"/><rect x="5" y="302.3" width="3" height="1" fill="#3a3a3a"/><rect x="3" y="311.9" width="6" height="1" fill="#3a3a3a"/><rect x="5" y="321.5" width="3" height="1" fill="#3a3a3a"/><rect x="5" y="331.1" width="3" height="1" fill="#3a3a3a"/><rect x="5" y="340.7" width="3" height="1" fill="#3a3a3a"/><text x="0" y="0" transform="translate(10.2,349.8) rotate(-90)" font-size="9" fill="#4a4a58" text-anchor="middle" font-family="Liberation Sans">1</text><rect x="5" y="359.9" width="3" height="1" fill="#3a3a3a"/><rect x="5" y="369.5" width="3" height="1" fill="#3a3a3a"/><rect x="5" y="379.1" width="3" height="1" fill="#3a3a3a"/><rect x="3" y="388.7" width="6" height="1" fill="#3a3a3a"/><rect x="5" y="398.3" width="3" height="1" fill="#3a3a3a"/><rect x="5" y="407.9" width="3" height="1" fill="#3a3a3a"/><rect x="5" y="417.5" width="3" height="1" fill="#3a3a3a"/><text x="0" y="0" transform="translate(10.2,426.6) rotate(-90)" font-size="9" fill="#4a4a58" text-anchor="middle" font-family="Liberation Sans">2</text><rect x="5" y="436.7" width="3" height="1" fill="#3a3a3a"/><rect x="5" y="446.3" width="3" height="1" fill="#3a3a3a"/><rect x="5" y="455.9" width="3" height="1" fill="#3a3a3a"/><rect x="3" y="465.5" width="6" height="1" fill="#3a3a3a"/><rect x="5" y="475.1" width="3" height="1" fill="#3a3a3a"/><rect x="5" y="484.7" width="3" height="1" fill="#3a3a3a"/><rect x="5" y="494.3" width="3" height="1" fill="#3a3a3a"/><text x="0" y="0" transform="translate(10.2,503.4) rotate(-90)" font-size="9" fill="#4a4a58" text-anchor="middle" font-family="Liberation Sans">3</text><rect x="5" y="513.5" width="3" height="1" fill="#3a3a3a"/><rect x="5" y="523.1" width="3" height="1" fill="#3a3a3a"/><rect x="5" y="532.7" width="3" height="1" fill="#3a3a3a"/><rect x="3" y="542.3" width="6" height="1" fill="#3a3a3a"/><rect x="5" y="551.9" width="3" height="1" fill="#3a3a3a"/><rect x="5" y="561.5" width="3" height="1" fill="#3a3a3a"/><rect x="5" y="571.1" width="3" height="1" fill="#3a3a3a"/><text x="0" y="0" transform="translate(10.2,580.2) rotate(-90)" font-size="9" fill="#4a4a58" text-anchor="middle" font-family="Liberation Sans">4</text><rect x="5" y="590.3" width="3" height="1" fill="#3a3a3a"/><rect x="5" y="599.9" width="3" height="1" fill="#3a3a3a"/><rect x="5" y="609.5" width="3" height="1" fill="#3a3a3a"/><rect x="3" y="619.1" width="6" height="1" fill="#3a3a3a"/><rect x="5" y="628.7" width="3" height="1" fill="#3a3a3a"/><rect x="5" y="638.3" width="3" height="1" fill="#3a3a3a"/><rect x="5" y="647.9" width="3" height="1" fill="#3a3a3a"/><text x="0" y="0" transform="translate(10.2,657.0) rotate(-90)" font-size="9" fill="#4a4a58" text-anchor="middle" font-family="Liberation Sans">5</text><rect x="5" y="667.1" width="3" height="1" fill="#3a3a3a"/><rect x="5" y="676.7" width="3" height="1" fill="#3a3a3a"/><rect x="5" y="686.3" width="3" height="1" fill="#3a3a3a"/><rect x="3" y="695.9" width="6" height="1" fill="#3a3a3a"/><rect x="5" y="705.5" width="3" height="1" fill="#3a3a3a"/><rect x="5" y="715.1" width="3" height="1" fill="#3a3a3a"/><rect x="5" y="724.7" width="3" height="1" fill="#3a3a3a"/><text x="0" y="0" transform="translate(10.2,733.8) rotate(-90)" font-size="9" fill="#4a4a58" text-anchor="middle" font-family="Liberation Sans">6</text><rect x="5" y="743.9" width="3" height="1" fill="#3a3a3a"/><rect x="5" y="753.5" width="3" height="1" fill="#3a3a3a"/><rect x="5" y="763.1" width="3" height="1" fill="#3a3a3a"/><rect x="3" y="772.7" width="6" height="1" fill="#3a3a3a"/><rect x="5" y="782.3" width="3" height="1" fill="#3a3a3a"/><rect x="5" y="791.9" width="3" height="1" fill="#3a3a3a"/><rect x="5" y="801.5" width="3" height="1" fill="#3a3a3a"/><text x="0" y="0" transform="translate(10.2,810.6) rotate(-90)" font-size="9" fill="#4a4a58" text-anchor="middle" font-family="Liberation Sans">7</text><rect x="5" y="820.7" width="3" height="1" fill="#3a3a3a"/><rect x="5" y="830.3" width="3" height="1" fill="#3a3a3a"/><rect x="5" y="839.9" width="3" height="1" fill="#3a3a3a"/><rect x="3" y="849.5" width="6" height="1" fill="#3a3a3a"/><rect x="5" y="859.1" width="3" height="1" fill="#3a3a3a"/><rect x="5" y="868.7" width="3" height="1" fill="#3a3a3a"/><rect x="5" y="878.3" width="3" height="1" fill="#3a3a3a"/><text x="0" y="0" transform="translate(10.2,887.4) rotate(-90)" font-size="9" fill="#4a4a58" text-anchor="middle" font-family="Liberation Sans">8</text><rect x="5" y="897.5" width="3" height="1" fill="#3a3a3a"/><rect x="5" y="907.1" width="3" height="1" fill="#3a3a3a"/></svg>
<div class="abs" style="left:107px;top:214px;width:649px;height:703px;background:#fff"></div>
<div class="abs" style="left:766px;top:214px;width:649px;height:703px;background:#fff"></div>
<div class="abs" style="left:1474px;top:170px;width:16px;height:747px;background:#f0f0f0;border-right:1px solid #b9b9b9;border-left:1px solid #d4d4d4"></div>
<div class="abs" style="left:1475px;top:188px;width:16px;height:394px;background:#dcdcdc"></div>
<div class="abs" style="left:1475px;top:171px;width:16px;height:17px;background:#fafafa"></div>
<svg class="abs" style="left:1478px;top:176px" width="10" height="6"><path d="M0 6L5 0.5L10 6z" fill="#777"/></svg>
<svg class="abs" style="left:1478px;top:905px" width="10" height="6"><path d="M0 0H9L4.5 5.5z" fill="#888"/></svg>
<div class="abs t" style="left:194.20px;top:252.97px;font-size:10.9px;line-height:10.9px;color:#7d7d7d;">DX Scientific Journal, Vol. 22, No. 1</div>
<div class="abs t" style="left:194.20px;top:252.97px;font-size:10.9px;line-height:10.9px;color:#7d7d7d;width:517.30px;text-align:right;">March, 2019</div>
<div class="abs t" style="left:250.00px;top:278.92px;font-size:19px;line-height:19px;color:#000;font-weight:bold;width:400.00px;text-align:center;">Multimodal, Stochastic</div>
<div class="abs t" style="left:249.00px;top:304.79px;font-size:18.8px;line-height:18.8px;color:#000;font-weight:bold;width:400.00px;text-align:center;">Symmetries for E-Commerce</div>
<div class="abs t" style="left:353.00px;top:348.55px;font-size:12.7px;line-height:12.7px;color:#3f6eae;font-weight:bold;width:200.00px;text-align:center;">Abstract</div>
<div id="L1" class="abs t d" style="left:355.40px;top:364.73px;font-size:10.6px;line-height:10.6px;color:#000;width:195.80px;text-align:justify;text-align-last:justify;">Recent advances in modular technology</div>
<div id="L2" class="abs t d" style="left:355.40px;top:378.92px;font-size:10.6px;line-height:10.6px;color:#000;width:195.80px;text-align:justify;text-align-last:justify;">and flexible archetypes are based entirely</div>
<div id="L3" class="abs t d" style="left:355.40px;top:393.11px;font-size:10.6px;line-height:10.6px;color:#000;width:195.80px;text-align:justify;text-align-last:justify;">on the assumption that Scheme and IPv4</div>
<div id="L4" class="abs t d" style="left:355.40px;top:407.30px;font-size:10.6px;line-height:10.6px;color:#000;width:195.80px;text-align:justify;text-align-last:justify;">are not in conflict with randomized</div>
<div id="L5" class="abs t d" style="left:355.40px;top:421.49px;font-size:10.6px;line-height:10.6px;color:#000;width:195.80px;text-align:justify;text-align-last:justify;">algorithms. In fact, few</div>
<div id="L6" class="abs t d" style="left:355.40px;top:435.68px;font-size:10.6px;line-height:10.6px;color:#000;width:195.80px;text-align:justify;text-align-last:justify;">cyberinformaticians would disagree with</div>
<div id="L7" class="abs t d" style="left:355.40px;top:449.87px;font-size:10.6px;line-height:10.6px;color:#000;width:195.80px;text-align:justify;text-align-last:justify;">the study of consistent hashing. We</div>
<div id="L8" class="abs t d" style="left:355.40px;top:464.06px;font-size:10.6px;line-height:10.6px;color:#000;width:195.80px;text-align:justify;text-align-last:justify;">present an analysis of hash tables, which</div>
<div id="L9" class="abs t d" style="left:355.40px;top:478.25px;font-size:10.6px;line-height:10.6px;color:#000;letter-spacing:-0.190px;">we call Ounce.</div>
<div class="abs t" style="left:148.00px;top:413.10px;font-size:9.1px;line-height:9.1px;color:#000;font-style:italic;width:200.00px;text-align:center;-webkit-text-stroke:0.25px #000;">Cale Joon-Ho,</div>
<div class="abs t" style="left:150.50px;top:425.90px;font-size:9.1px;line-height:9.1px;color:#000;font-style:italic;width:200.00px;text-align:center;-webkit-text-stroke:0.25px #000;">Ph.D</div>
<div class="abs t" style="left:546.50px;top:409.50px;font-size:9.1px;line-height:9.1px;color:#000;font-style:italic;width:200.00px;text-align:center;-webkit-text-stroke:0.25px #000;">Sabella Jaida,</div>
<div class="abs t" style="left:546.50px;top:422.30px;font-size:9.1px;line-height:9.1px;color:#000;font-style:italic;width:200.00px;text-align:center;-webkit-text-stroke:0.25px #000;">Ph.D.</div>
<svg class="abs" style="left:0;top:0" width="760" height="440">
  <defs>
  <linearGradient id="shirt" x1="0" y1="0" x2="1" y2="1"><stop offset="0" stop-color="#5060b4"/><stop offset="1" stop-color="#3a4592"/></linearGradient>
  <radialGradient id="skinm" cx="0.45" cy="0.4" r="0.6"><stop offset="0" stop-color="#e4b38e"/><stop offset="1" stop-color="#c48a5e"/></radialGradient>
  <linearGradient id="shad" x1="0" y1="0" x2="0" y2="1"><stop offset="0" stop-color="#9a9a9a" stop-opacity="0.7"/><stop offset="1" stop-color="#fff" stop-opacity="0"/></linearGradient>
  </defs>
  <rect x="212" y="393" width="68" height="6" fill="url(#shad)"/>
  <!-- shirt body -->
  <path d="M211 336C220 331 228 328 233 327L262 327C268 329 274 333 276 336C286 342 292 356 295 372L296 384L291 392L279 395L213 395L209 393C205 382 202 368 203 358C204 348 207 340 211 336z" fill="url(#shirt)"/>
  <!-- fold shading -->
  <path d="M212 348C216 360 218 372 220 392L214 394C209 380 206 364 208 350z" fill="#34408a" opacity="0.6"/>
  <path d="M250 352L252 372L248 372z" fill="#2c3678" opacity="0.7"/>
  <!-- t-shirt -->
  <path d="M237 333L254 333L251 353z" fill="#a4a4a4"/>
  <!-- collar -->
  <path d="M232 327L240 330L251 353L246 356L231 336z" fill="#2f3a80"/>
  <path d="M262 327L256 331L252 352L256 353L267 334z" fill="#3e4a9c"/>
  <!-- neck -->
  <path d="M237 318H256V331L247 336L237 331z" fill="#c48d66"/>
  <!-- head -->
  <ellipse cx="245" cy="305" rx="14" ry="21" fill="url(#skinm)"/>
  <ellipse cx="231" cy="306" rx="2.5" ry="4.5" fill="#c88e62"/><ellipse cx="259" cy="306" rx="2.5" ry="4.5" fill="#c88e62"/>
  <path d="M229 302C225 290 228 281 236 279L240 276L244 279L250 276L253 280L259 279C264 284 264 294 262 302L259 292C252 288 240 287 232 293z" fill="#151515"/>
  <path d="M239 315Q245 318 251 315" stroke="#f4e4da" stroke-width="1.2" fill="none"/>
  <path d="M235 301Q238 299 241 301M249 301Q252 299 255 301" stroke="#4a3020" stroke-width="1" fill="none"/>
  <!-- forearms -->
  <path d="M229 383C244 381 262 380 276 380L278 391C262 393 246 395 231 395z" fill="#c28a62"/>
  <path d="M231 373C246 371 262 368 277 366L279 376C264 379 248 382 232 383z" fill="#dba67e"/>
  <path d="M269 363L278 359L282 369L275 372z" fill="#d7a07a"/>
  <!-- sleeve cuffs -->
  <path d="M218 367L235 369L239 394L221 395z" fill="#3d489a" stroke="#2e387e" stroke-width="0.8"/>
  <path d="M275 368L289 365L293 389L278 392z" fill="#3a4592" stroke="#2e387e" stroke-width="0.8"/>
</svg>
<svg class="abs" style="left:0;top:0" width="760" height="440">
  <defs>
  <linearGradient id="sw" x1="0" y1="0" x2="0" y2="1"><stop offset="0" stop-color="#e0503a"/><stop offset="0.88" stop-color="#d6442e"/><stop offset="1" stop-color="#f2b0a0"/></linearGradient>
  <radialGradient id="skinw" cx="0.5" cy="0.45" r="0.6"><stop offset="0" stop-color="#9c664a"/><stop offset="1" stop-color="#74462e"/></radialGradient>
  </defs>
  <path d="M606 350C612 340 626 336 636 335L662 335C674 336 686 342 690 352C694 364 694 380 693 393H601C600 378 601 362 606 350z" fill="url(#sw)"/>
  <path d="M604 378C626 384 664 384 692 378L693 390C664 394 626 394 603 390z" fill="#cc3a26" opacity="0.7"/>
  <path d="M634 289C640 281 658 280 665 289C672 298 674 312 675 322C677 332 681 338 684 343C680 350 672 350 668 346C662 340 660 334 660 328L637 328C636 334 632 338 626 339C620 339 616 338 618 334C622 328 623 318 624 308C625 300 629 294 634 289z" fill="#141010"/>
  <path d="M637 322H660V334C652 338 644 338 637 334z" fill="#d84a32"/>
  <ellipse cx="648.5" cy="306.5" rx="13.5" ry="19.5" fill="url(#skinw)"/>
  <path d="M635 300C634 288 641 282 650 282C659 282 664 290 663 300C658 292 653 289 648 290C642 291 637 295 635 300z" fill="#141010"/>
  <path d="M640 303Q642.5 301.5 645 303M652 303Q654.5 301.5 657 303" stroke="#2a1810" stroke-width="1.2" fill="none"/>
  <path d="M644 317Q648.5 319.5 653 317" stroke="#e8c4b4" stroke-width="1" fill="none"/>
  <path d="M623 360V390M673 360V390" stroke="#c83c28" stroke-width="1" opacity="0.5"/>
  <ellipse cx="626.5" cy="384" rx="4.5" ry="3.5" fill="#8a5a40"/>
</svg>
<div class="abs t" style="left:194.20px;top:521.73px;font-size:14.5px;line-height:14.5px;color:#2f5f9f;-webkit-text-stroke:0.35px #2f5f9f;">1 Introduction</div>
<div id="L10" class="abs t d" style="left:194.20px;top:540.33px;font-size:10.6px;line-height:10.6px;color:#000;width:517.30px;text-align:justify;text-align-last:justify;">Biologists agree that game-theoretic modalities are an interesting new topic in the field of ubiquitous</div>
<div id="L11" class="abs t d" style="left:194.20px;top:554.57px;font-size:10.6px;line-height:10.6px;color:#000;width:517.30px;text-align:justify;text-align-last:justify;">steganography, and researchers concur. This is a direct result of the construction of link-level</div>
<div id="L12" class="abs t d" style="left:194.20px;top:568.81px;font-size:10.6px;line-height:10.6px;color:#000;width:517.30px;text-align:justify;text-align-last:justify;">acknowledgements. Contrarily, an extensive problem in hardware and architecture is the construction of the</div>
<div id="L13" class="abs t d" style="left:194.20px;top:583.05px;font-size:10.6px;line-height:10.6px;color:#000;">emulation of checksums [<span class="lk">1</span>,<span class="lk">2</span>]. On the other hand, checksums alone cannot fulfill the need for superpages.</div>
<div id="L14" class="abs t d" style="left:194.20px;top:603.33px;font-size:10.6px;line-height:10.6px;color:#000;width:517.30px;text-align:justify;text-align-last:justify;">Our focus in this work is not on whether the acclaimed highly-available algorithm for the emulation of</div>
<div id="L15" class="abs t d" style="left:194.20px;top:617.57px;font-size:10.6px;line-height:10.6px;color:#000;width:517.30px;text-align:justify;text-align-last:justify;">systems by <span class="lk">Scott Shenker et al. [3]</span> is Turing complete, but rather on exploring a novel system for the</div>
<div id="L16" class="abs t d" style="left:194.20px;top:631.81px;font-size:10.6px;line-height:10.6px;color:#000;width:517.30px;text-align:justify;text-align-last:justify;">simulation of the transistor (Ounce). Indeed, suffix trees have a long history of cooperating in this manner [<span class="lk">4</span>].</div>
<div id="L17" class="abs t d" style="left:194.20px;top:646.05px;font-size:10.6px;line-height:10.6px;color:#000;width:517.30px;text-align:justify;text-align-last:justify;">Even though conventional wisdom states that this challenge is generally answered by the improvement of B-</div>
<div id="L18" class="abs t d" style="left:194.20px;top:660.29px;font-size:10.6px;line-height:10.6px;color:#000;width:517.30px;text-align:justify;text-align-last:justify;">trees, we believe that a different method is necessary. The impact on software engineering of this technique</div>
<div id="L19" class="abs t d" style="left:194.20px;top:674.53px;font-size:10.6px;line-height:10.6px;color:#000;">has been well-received.</div>
<div id="L20" class="abs t d" style="left:194.20px;top:694.83px;font-size:10.6px;line-height:10.6px;color:#000;width:517.30px;text-align:justify;text-align-last:justify;">Physicists largely study the partition table in the place of ubiquitous communication. Such a hypothesis at first</div>
<div id="L21" class="abs t d" style="left:194.20px;top:709.07px;font-size:10.6px;line-height:10.6px;color:#000;width:517.30px;text-align:justify;text-align-last:justify;">glance seems unexpected but is buffetted by prior work in the field. Unfortunately, this solution is mostly</div>
<div id="L22" class="abs t d" style="left:194.20px;top:723.31px;font-size:10.6px;line-height:10.6px;color:#000;width:517.30px;text-align:justify;text-align-last:justify;">well-received. Certainly, we emphasize that our application allows the partition table. Unfortunately, this</div>
<div id="L23" class="abs t d" style="left:194.20px;top:737.55px;font-size:10.6px;line-height:10.6px;color:#000;width:517.30px;text-align:justify;text-align-last:justify;">approach is generally adamantly opposed. Despite the fact that similar systems synthesize the understanding</div>
<div id="L24" class="abs t d" style="left:194.20px;top:751.79px;font-size:10.6px;line-height:10.6px;color:#000;width:517.30px;text-align:justify;text-align-last:justify;">of forward-error correction, we realize this objective without analyzing the natural unification of DNS and</div>
<div id="L25" class="abs t d" style="left:194.20px;top:766.03px;font-size:10.6px;line-height:10.6px;color:#000;">suffix trees.</div>
<div id="L26" class="abs t d" style="left:194.20px;top:786.93px;font-size:10.6px;line-height:10.6px;color:#000;width:517.30px;text-align:justify;text-align-last:justify;">This work presents three advances above existing work. For starters, we use replicated theory to disprove that</div>
<div id="L27" class="abs t d" style="left:194.20px;top:801.17px;font-size:10.6px;line-height:10.6px;color:#000;width:517.30px;text-align:justify;text-align-last:justify;">DHTs and wide-area networks can collude to fulfill this intent. Along these same lines, we concentrate our</div>
<div id="L28" class="abs t d" style="left:194.20px;top:815.41px;font-size:10.6px;line-height:10.6px;color:#000;width:517.30px;text-align:justify;text-align-last:justify;">efforts on arguing that write-ahead logging and suffix trees can cooperate to fulfill this ambition. We propose</div>
<div id="L29" class="abs t d" style="left:194.20px;top:829.65px;font-size:10.6px;line-height:10.6px;color:#000;width:517.30px;text-align:justify;text-align-last:justify;">a novel application for the simulation of robots (Ounce), which we use to verify that the much-touted</div>
<div id="L30" class="abs t d" style="left:194.20px;top:843.89px;font-size:10.6px;line-height:10.6px;color:#000;width:342.20px;text-align:justify;text-align-last:justify;">permutable algorithm for the synthesis of access points [<span class="lk">5</span>] is impossible.</div>
<div id="L31" class="abs t d" style="left:194.20px;top:864.63px;font-size:10.6px;line-height:10.6px;color:#000;width:517.30px;text-align:justify;text-align-last:justify;">The rest of the paper proceeds as follows. We motivate the need for write-ahead logging. To achieve this</div>
<div id="L32" class="abs t d" style="left:194.20px;top:878.93px;font-size:10.6px;line-height:10.6px;color:#000;width:517.30px;text-align:justify;text-align-last:justify;">objective, we disconfirm that model checking and IPv6 are continuously incompatible. Along these same lines,</div>
<div id="L33" class="abs t d" style="left:194.20px;top:893.23px;font-size:10.6px;line-height:10.6px;color:#000;width:517.30px;text-align:justify;text-align-last:justify;">we place our work in context with the existing work in this area. Furthermore, to overcome this issue, we</div>
<div id="L34" class="abs t d" style="left:194.20px;top:907.53px;font-size:10.6px;line-height:10.6px;color:#000;width:443.80px;text-align:justify;text-align-last:justify;">better understand how flip-flop gates can be applied to the simulation of simulated annealing.</div>
<div class="abs" style="left:258px;top:567px;width:1px;height:14px;background:#000"></div>
<div class="abs t" style="left:854.50px;top:252.73px;font-size:11.3px;line-height:11.3px;color:#7d7d7d;">Multimodal, Stochastic Symmetries for E-Commerce</div>
<div class="abs t" style="left:854.50px;top:276.03px;font-size:14.5px;line-height:14.5px;color:#2f5f9f;-webkit-text-stroke:0.35px #2f5f9f;">2 Principles</div>
<div id="L35" class="abs t d" style="left:854.50px;top:294.03px;font-size:10.6px;line-height:10.6px;color:#000;width:239.20px;text-align:justify;text-align-last:justify;">The properties of our methodology depend</div>
<div id="L36" class="abs t d" style="left:854.50px;top:308.23px;font-size:10.6px;line-height:10.6px;color:#000;width:239.20px;text-align:justify;text-align-last:justify;">greatly on the assumptions inherent in our design;</div>
<div id="L37" class="abs t d" style="left:854.50px;top:322.43px;font-size:10.6px;line-height:10.6px;color:#000;width:239.20px;text-align:justify;text-align-last:justify;">in this section, we outline those assumptions. On a</div>
<div id="L38" class="abs t d" style="left:854.50px;top:336.63px;font-size:10.6px;line-height:10.6px;color:#000;width:239.20px;text-align:justify;text-align-last:justify;">similar note, we show Ounce's stochastic storage</div>
<div id="L39" class="abs t d" style="left:854.50px;top:350.83px;font-size:10.6px;line-height:10.6px;color:#000;width:239.20px;text-align:justify;text-align-last:justify;">in Figure 1. Similarly, we assume that each</div>
<div id="L40" class="abs t d" style="left:854.50px;top:365.03px;font-size:10.6px;line-height:10.6px;color:#000;width:239.20px;text-align:justify;text-align-last:justify;">component of our heuristic emulates spreadsheets</div>
<div id="L41" class="abs t d" style="left:854.50px;top:379.23px;font-size:10.6px;line-height:10.6px;color:#000;width:195.90px;text-align:justify;text-align-last:justify;">[<span class="lk">6</span>], independent of all other components.</div>
<div class="abs t" style="left:854.50px;top:497.11px;font-size:10.5px;line-height:10.5px;color:#000;width:239.20px;text-align:center;white-space:pre;">Figure 1:  The flowchart used by Ounce</div>
<div id="L42" class="abs t d" style="left:854.50px;top:529.53px;font-size:10.6px;line-height:10.6px;color:#000;width:239.20px;text-align:justify;text-align-last:justify;">Next, we estimate that each component of Ounce</div>
<div id="L43" class="abs t d" style="left:854.50px;top:543.73px;font-size:10.6px;line-height:10.6px;color:#000;width:239.20px;text-align:justify;text-align-last:justify;">provides pseudorandom theory, independent of</div>
<div id="L44" class="abs t d" style="left:854.50px;top:557.93px;font-size:10.6px;line-height:10.6px;color:#000;width:239.20px;text-align:justify;text-align-last:justify;">all other components. We postulate that each</div>
<div id="L45" class="abs t d" style="left:854.50px;top:572.13px;font-size:10.6px;line-height:10.6px;color:#000;width:239.20px;text-align:justify;text-align-last:justify;">component of our method enables voice-over-IP,</div>
<div id="L46" class="abs t d" style="left:854.50px;top:586.33px;font-size:10.6px;line-height:10.6px;color:#000;width:239.20px;text-align:justify;text-align-last:justify;">independent of all other components. This is a</div>
<div id="L47" class="abs t d" style="left:854.50px;top:600.53px;font-size:10.6px;line-height:10.6px;color:#000;width:239.20px;text-align:justify;text-align-last:justify;">confirmed property of Ounce. Despite the results</div>
<div id="L48" class="abs t d" style="left:854.50px;top:614.73px;font-size:10.6px;line-height:10.6px;color:#000;width:239.20px;text-align:justify;text-align-last:justify;">by V. Wilson et al., we can argue that rasterization</div>
<div id="L49" class="abs t d" style="left:854.50px;top:631.73px;font-size:10.6px;line-height:10.6px;color:#000;width:239.20px;text-align:justify;text-align-last:justify;">[<span class="lk">7</span>, <span class="lk">8</span>] and SCSI disks are usually incompatible. We</div>
<div id="L50" class="abs t d" style="left:854.50px;top:645.93px;font-size:10.6px;line-height:10.6px;color:#000;width:239.20px;text-align:justify;text-align-last:justify;">believe that SMPs can be made classical,</div>
<div id="L51" class="abs t d" style="left:854.50px;top:660.13px;font-size:10.6px;line-height:10.6px;color:#000;">autonomous, and interactive.</div>
<div class="abs t" style="left:854.50px;top:906.41px;font-size:10.5px;line-height:10.5px;color:#000;width:239.20px;text-align:center;white-space:pre;">Figure 2:  The relationship between Ounce and</div>
<div class="abs t" style="left:1132.30px;top:275.23px;font-size:14.5px;line-height:14.5px;color:#2f5f9f;-webkit-text-stroke:0.35px #2f5f9f;">3 Implementation</div>
<div id="L52" class="abs t d" style="left:1132.30px;top:294.03px;font-size:10.6px;line-height:10.6px;color:#000;width:239.40px;text-align:justify;text-align-last:justify;">Ounce is elegant; so, too, must be our</div>
<div id="L53" class="abs t d" style="left:1132.30px;top:308.19px;font-size:10.6px;line-height:10.6px;color:#000;width:239.40px;text-align:justify;text-align-last:justify;">implementation. Similarly, the collection of shell</div>
<div id="L54" class="abs t d" style="left:1132.30px;top:322.35px;font-size:10.6px;line-height:10.6px;color:#000;width:239.40px;text-align:justify;text-align-last:justify;">scripts and the server daemon must run with the</div>
<div id="L55" class="abs t d" style="left:1132.30px;top:336.51px;font-size:10.6px;line-height:10.6px;color:#000;width:239.40px;text-align:justify;text-align-last:justify;">same permissions. Next, Ounce requires root</div>
<div id="L56" class="abs t d" style="left:1132.30px;top:350.67px;font-size:10.6px;line-height:10.6px;color:#000;width:239.40px;text-align:justify;text-align-last:justify;">access in order to cache the lookaside buffer.</div>
<div id="L57" class="abs t d" style="left:1132.30px;top:364.83px;font-size:10.6px;line-height:10.6px;color:#000;width:239.40px;text-align:justify;text-align-last:justify;">Hackers worldwide have complete control over the</div>
<div id="L58" class="abs t d" style="left:1132.30px;top:378.99px;font-size:10.6px;line-height:10.6px;color:#000;width:239.40px;text-align:justify;text-align-last:justify;">client-side library, which of course is necessary so</div>
<div id="L59" class="abs t d" style="left:1132.30px;top:393.15px;font-size:10.6px;line-height:10.6px;color:#000;width:239.40px;text-align:justify;text-align-last:justify;">that architecture can be made compact, constant-</div>
<div id="L60" class="abs t d" style="left:1132.30px;top:407.31px;font-size:10.6px;line-height:10.6px;color:#000;width:239.40px;text-align:justify;text-align-last:justify;">time, and certifiable. The server daemon contains</div>
<div id="L61" class="abs t d" style="left:1132.30px;top:421.47px;font-size:10.6px;line-height:10.6px;color:#000;width:239.40px;text-align:justify;text-align-last:justify;">about 68 instructions of Fortran. We plan to</div>
<div id="L62" class="abs t d" style="left:1132.30px;top:435.63px;font-size:10.6px;line-height:10.6px;color:#000;width:239.40px;text-align:justify;text-align-last:justify;">release all of this code under copy-once, run-</div>
<div id="L63" class="abs t d" style="left:1132.30px;top:452.43px;font-size:10.6px;line-height:10.6px;color:#000;">nowhere [<span class="lk">9</span>, <span class="lk">10</span>].</div>
<div class="abs t" style="left:1132.30px;top:481.73px;font-size:14.5px;line-height:14.5px;color:#2f5f9f;-webkit-text-stroke:0.35px #2f5f9f;">4 Evaluation</div>
<div id="L64" class="abs t d" style="left:1132.30px;top:500.33px;font-size:10.6px;line-height:10.6px;color:#000;width:239.40px;text-align:justify;text-align-last:justify;">We now discuss our evaluation. Our overall</div>
<div id="L65" class="abs t d" style="left:1132.30px;top:514.33px;font-size:10.6px;line-height:10.6px;color:#000;">evaluation seeks to prove three hypotheses:</div>
<div id="L66" class="abs t d" style="left:1170.30px;top:535.23px;font-size:10.6px;line-height:10.6px;color:#000;width:201.40px;text-align:justify;text-align-last:justify;">that the Macintosh SE of yesteryear</div>
<div id="L67" class="abs t d" style="left:1170.30px;top:549.73px;font-size:10.6px;line-height:10.6px;color:#000;width:201.40px;text-align:justify;text-align-last:justify;">actually exhibits better effective interrupt</div>
<div id="L68" class="abs t d" style="left:1170.30px;top:564.03px;font-size:10.6px;line-height:10.6px;color:#000;">rate than today's hardware;</div>
<div id="L69" class="abs t d" style="left:1170.30px;top:578.13px;font-size:10.6px;line-height:10.6px;color:#000;width:201.40px;text-align:justify;text-align-last:justify;">that we can do much to affect a method's</div>
<div id="L70" class="abs t d" style="left:1170.30px;top:592.43px;font-size:10.6px;line-height:10.6px;color:#000;">median response time;</div>
<div id="L71" class="abs t d" style="left:1170.30px;top:606.93px;font-size:10.6px;line-height:10.6px;color:#000;width:201.40px;text-align:justify;text-align-last:justify;">that voice-over-IP no longer adjusts</div>
<div id="L72" class="abs t d" style="left:1170.30px;top:621.23px;font-size:10.6px;line-height:10.6px;color:#000;width:99.80px;text-align:justify;text-align-last:justify;">effective throughput.</div>
<div class="abs" style="left:1152px;top:542.1px;width:3.6px;height:3.6px;border:0.9px solid #222;border-radius:50%"></div>
<div class="abs" style="left:1152px;top:585.0px;width:3.6px;height:3.6px;border:0.9px solid #222;border-radius:50%"></div>
<div class="abs" style="left:1152px;top:613.8px;width:3.6px;height:3.6px;border:0.9px solid #222;border-radius:50%"></div>
<div id="L73" class="abs t d" style="left:1132.30px;top:641.93px;font-size:10.6px;line-height:10.6px;color:#000;">We ran four novel experiments:</div>
<div id="L74" class="abs t d" style="left:1170.30px;top:662.43px;font-size:10.6px;line-height:10.6px;color:#000;width:201.40px;text-align:justify;text-align-last:justify;">We measured hard disk space as a</div>
<div id="L75" class="abs t d" style="left:1170.30px;top:676.33px;font-size:10.6px;line-height:10.6px;color:#000;width:201.40px;text-align:justify;text-align-last:justify;">function of USB key space on an IBM PC</div>
<div id="L76" class="abs t d" style="left:1170.30px;top:690.83px;font-size:10.6px;line-height:10.6px;color:#000;">Junior.</div>
<div id="L77" class="abs t d" style="left:1170.30px;top:705.13px;font-size:10.6px;line-height:10.6px;color:#000;width:201.40px;text-align:justify;text-align-last:justify;">We compared average response time on</div>
<div id="L78" class="abs t d" style="left:1170.30px;top:719.23px;font-size:10.6px;line-height:10.6px;color:#000;width:201.40px;text-align:justify;text-align-last:justify;">the Microsoft Windows NT, NetBSD and</div>
<div id="L79" class="abs t d" style="left:1170.30px;top:733.13px;font-size:10.6px;line-height:10.6px;color:#000;letter-spacing:-0.070px;">AT&amp;T System V operating systems.</div>
<div id="L80" class="abs t d" style="left:1170.30px;top:748.53px;font-size:10.6px;line-height:10.6px;color:#000;width:201.40px;text-align:justify;text-align-last:justify;">We asked (and answered) what would</div>
<div id="L81" class="abs t d" style="left:1170.30px;top:762.63px;font-size:10.6px;line-height:10.6px;color:#000;width:201.40px;text-align:justify;text-align-last:justify;">happen if provably extremely</div>
<div id="L82" class="abs t d" style="left:1170.30px;top:776.53px;font-size:10.6px;line-height:10.6px;color:#000;width:201.40px;text-align:justify;text-align-last:justify;">independently parallel 802.11 mesh</div>
<div id="L83" class="abs t d" style="left:1170.30px;top:790.43px;font-size:10.6px;line-height:10.6px;color:#000;width:201.40px;text-align:justify;text-align-last:justify;">networks were used instead of vacuum</div>
<div id="L84" class="abs t d" style="left:1170.30px;top:804.93px;font-size:10.6px;line-height:10.6px;color:#000;">tubes.</div>
<div id="L85" class="abs t d" style="left:1170.30px;top:819.13px;font-size:10.6px;line-height:10.6px;color:#000;width:201.40px;text-align:justify;text-align-last:justify;">We dogfooded Ounce on our own</div>
<div id="L86" class="abs t d" style="left:1170.30px;top:833.13px;font-size:10.6px;line-height:10.6px;color:#000;width:201.40px;text-align:justify;text-align-last:justify;">desktop machines, paying particular</div>
<div id="L87" class="abs t d" style="left:1170.30px;top:847.13px;font-size:10.6px;line-height:10.6px;color:#000;width:143.60px;text-align:justify;text-align-last:justify;">attention to floppy disk speed.</div>
<div class="abs t" style="left:1151.00px;top:662.83px;font-size:10.6px;line-height:10.6px;color:#000;-webkit-text-stroke:0.1px #000;">1.</div>
<div class="abs t" style="left:1151.00px;top:705.53px;font-size:10.6px;line-height:10.6px;color:#000;-webkit-text-stroke:0.1px #000;">2.</div>
<div class="abs t" style="left:1151.00px;top:748.93px;font-size:10.6px;line-height:10.6px;color:#000;-webkit-text-stroke:0.1px #000;">3.</div>
<div class="abs t" style="left:1151.00px;top:819.53px;font-size:10.6px;line-height:10.6px;color:#000;-webkit-text-stroke:0.1px #000;">4.</div>
<div id="L88" class="abs t d" style="left:1132.30px;top:868.13px;font-size:10.6px;line-height:10.6px;color:#000;width:239.40px;text-align:justify;text-align-last:justify;">Afterwards, we discuss all four experiments. The</div>
<div id="L89" class="abs t d" style="left:1132.30px;top:882.23px;font-size:10.6px;line-height:10.6px;color:#000;width:239.40px;text-align:justify;text-align-last:justify;">obtained results prove that four years of hard</div>
<div id="L90" class="abs t d" style="left:1132.30px;top:896.23px;font-size:10.6px;line-height:10.6px;color:#000;width:239.40px;text-align:justify;text-align-last:justify;">work were wasted on this project. Our power</div>
<svg class="abs" style="left:0;top:0" width="1500" height="917">
<defs>
    <linearGradient id="gblue" x1="0" y1="0" x2="0" y2="1"><stop offset="0" stop-color="#4b96dc"/><stop offset="1" stop-color="#3476c2"/></linearGradient>
    <linearGradient id="ggreen" x1="0" y1="0" x2="0" y2="1"><stop offset="0" stop-color="#6db53b"/><stop offset="1" stop-color="#4e8d2a"/></linearGradient>
    <linearGradient id="gorange" x1="0" y1="0" x2="0" y2="1"><stop offset="0" stop-color="#fb7f1f"/><stop offset="1" stop-color="#d0601a"/></linearGradient>
    <filter id="blur" x="-10%" y="-10%" width="130%" height="140%"><feGaussianBlur stdDeviation="1.2"/></filter>
    <marker id="arr" markerWidth="8" markerHeight="8" refX="7" refY="4" orient="auto" markerUnits="userSpaceOnUse"><path d="M0 0.5L7.5 4L0 7.5z" fill="#5a5a5a"/></marker>
    <marker id="arrs" markerWidth="8" markerHeight="8" refX="0.5" refY="4" orient="auto-start-reverse" markerUnits="userSpaceOnUse"><path d="M0 0.5L7.5 4L0 7.5z" fill="#5a5a5a"/></marker>
    </defs>
<path d="M958.2 407.1H1005.8V432.6H958.2z" fill="#000" opacity="0.18" transform="translate(1.5,2)" filter="url(#blur)"/><path d="M958.2 407.1H1005.8V432.6H958.2z" fill="url(#gblue)"/>
<path d="M1036.5 407H1086.8V432.3H1036.5z" fill="#000" opacity="0.18" transform="translate(1.5,2)" filter="url(#blur)"/><path d="M1036.5 407H1086.8V432.3H1036.5z" fill="url(#ggreen)"/>
<path d="M875 454H922.6V479.4H875z" fill="#000" opacity="0.18" transform="translate(1.5,2)" filter="url(#blur)"/><path d="M875 454H922.6V479.4H875z" fill="url(#gorange)"/>
<path d="M958.2 453.4H1005.8V479H958.2z" fill="#000" opacity="0.18" transform="translate(1.5,2)" filter="url(#blur)"/><path d="M958.2 453.4H1005.8V479H958.2z" fill="url(#ggreen)"/>
<path d="M1005.8 419.3H1036" stroke="#5a5a5a" stroke-width="1.2" fill="none" marker-end="url(#arr)"/>
<path d="M981.6 453.4V433" stroke="#5a5a5a" stroke-width="1.2" fill="none" marker-end="url(#arr)"/>
<path d="M922.6 465.5H958" stroke="#5a5a5a" stroke-width="1.2" fill="none" marker-end="url(#arr)"/>
<path d="M935 465.5V489.5H859.4V466.6H875" stroke="#5a5a5a" stroke-width="1.2" fill="none" marker-end="url(#arr)"/>
<text x="982" y="423.4" font-size="9.8" fill="#fff" text-anchor="middle" font-family="Liberation Sans">Video</text>
<text x="1061.6" y="424.4" font-size="9.8" fill="#fff" text-anchor="middle" font-family="Liberation Sans">Ounce</text>
<text x="898.8" y="471.4" font-size="9.8" fill="#fff" text-anchor="middle" font-family="Liberation Sans">Trap</text>
<text x="982" y="471.4" font-size="9.8" fill="#fff" text-anchor="middle" font-family="Liberation Sans">JVM</text>
<path d="M855.3 686.6H897.8V711L876.55 725.2L855.3 711z" fill="#000" opacity="0.18" transform="translate(1.5,2)" filter="url(#blur)"/><path d="M855.3 686.6H897.8V711L876.55 725.2L855.3 711z" fill="url(#gblue)"/>
<path d="M855.3 745.8H897.8V767.7L876.55 783L855.3 767.7z" fill="#000" opacity="0.18" transform="translate(1.5,2)" filter="url(#blur)"/><path d="M855.3 745.8H897.8V767.7L876.55 783L855.3 767.7z" fill="url(#gorange)"/>
<path d="M853.2 808H928.7V836.6H853.2z" fill="#000" opacity="0.18" transform="translate(1.5,2)" filter="url(#blur)"/><path d="M853.2 808H928.7V836.6H853.2z" fill="url(#gblue)"/>
<path d="M853.2 858.5H928.7V883H853.2z" fill="#000" opacity="0.18" transform="translate(1.5,2)" filter="url(#blur)"/><path d="M853.2 858.5H928.7V883H853.2z" fill="url(#gblue)"/>
<path d="M947.2 808H1013V836.6H947.2z" fill="#000" opacity="0.18" transform="translate(1.5,2)" filter="url(#blur)"/><path d="M947.2 808H1013V836.6H947.2z" fill="url(#gblue)"/>
<path d="M1036.6 807H1087L1094 821.45L1087 835.9H1036.6L1029.6 821.45z" fill="#000" opacity="0.18" transform="translate(1.5,2)" filter="url(#blur)"/><path d="M1036.6 807H1087L1094 821.45L1087 835.9H1036.6L1029.6 821.45z" fill="url(#gblue)"/>
<path d="M946.7 744.5H1013.6V772.8H946.7z" fill="#000" opacity="0.18" transform="translate(1.5,2)" filter="url(#blur)"/><path d="M946.7 744.5H1013.6V772.8H946.7z" fill="url(#ggreen)"/>
<path d="M1029 744H1094.7V772.8H1029z" fill="#000" opacity="0.18" transform="translate(1.5,2)" filter="url(#blur)"/><path d="M1029 744H1094.7V772.8H1029z" fill="url(#gblue)"/>
<path d="M991 686.6H1047.8V715.7H991z" fill="#000" opacity="0.18" transform="translate(1.5,2)" filter="url(#blur)"/><path d="M991 686.6H1047.8V715.7H991z" fill="url(#gblue)"/>
<path d="M876.6 725.2V745" stroke="#5a5a5a" stroke-width="1.2" fill="none" marker-end="url(#arr)"/>
<path d="M876.6 783V796H889.3V807.5" stroke="#5a5a5a" stroke-width="1.2" fill="none" marker-end="url(#arr)"/>
<path d="M890.8 858.5V837" stroke="#5a5a5a" stroke-width="1.2" fill="none" marker-end="url(#arr)"/>
<path d="M928.7 823.5H947" stroke="#5a5a5a" stroke-width="1.2" fill="none" marker-end="url(#arr)"/>
<path d="M1014 821H1029" stroke="#5a5a5a" stroke-width="1.2" fill="none" marker-end="url(#arr)" marker-start="url(#arrs)"/>
<path d="M979.4 808V773.5" stroke="#5a5a5a" stroke-width="1.2" fill="none" marker-end="url(#arr)"/>
<path d="M1062.5 807V773.5" stroke="#5a5a5a" stroke-width="1.2" fill="none" marker-end="url(#arr)"/>
<path d="M979.4 744.5V732H1062.5V744" stroke="#5a5a5a" stroke-width="1.2" fill="none"/>
<path d="M1020 732V716.5" stroke="#5a5a5a" stroke-width="1.2" fill="none" marker-end="url(#arr)"/>
<text x="876.6" y="703.5" font-size="9.9" fill="#fff" text-anchor="middle" font-family="Liberation Sans">Gateway</text>
<text x="876.6" y="762.0" font-size="9.9" fill="#fff" text-anchor="middle" font-family="Liberation Sans">Strobe</text>
<text x="876.6" y="775.0" font-size="9.9" fill="#fff" text-anchor="middle" font-family="Liberation Sans">A</text>
<text x="891" y="824.5" font-size="9.9" fill="#fff" text-anchor="middle" font-family="Liberation Sans">Mean Rocks</text>
<text x="891" y="874.5" font-size="9.9" fill="#fff" text-anchor="middle" font-family="Liberation Sans">Parallel</text>
<text x="980" y="824.5" font-size="9.9" fill="#fff" text-anchor="middle" font-family="Liberation Sans">DNS Move</text>
<text x="1062" y="825.5" font-size="9.9" fill="#fff" text-anchor="middle" font-family="Liberation Sans">Paradox D</text>
<text x="980" y="761.5" font-size="9.9" fill="#fff" text-anchor="middle" font-family="Liberation Sans">Ounce Node</text>
<text x="1062" y="760.5" font-size="9.9" fill="#fff" text-anchor="middle" font-family="Liberation Sans">Morse Unit</text>
<text x="1019.5" y="705.5" font-size="9.9" fill="#fff" text-anchor="middle" font-family="Liberation Sans">Web</text>
</svg>
<div class="abs" style="left:8px;top:917px;width:1484px;height:27px;background:#484848"></div>
<div class="abs t" style="left:14.50px;top:926.37px;font-size:10.2px;line-height:10.2px;color:#f0f0f0;">PAGE 1 OF 3</div>
<div class="abs t" style="left:90.70px;top:926.45px;font-size:10.1px;line-height:10.1px;color:#f0f0f0;">1084 WORDS</div>
<div class="abs t" style="left:1308.50px;top:926.02px;font-size:11.2px;line-height:11.2px;color:#f4f4f4;">80%</div>
<svg class="abs" style="left:1330px;top:920px" width="160" height="22">
      <circle cx="9.5" cy="10.5" r="5.5" fill="#8a8a8a"/><rect x="6.5" y="10" width="6" height="1.4" fill="#484848"/>
      <rect x="21" y="9.5" width="116" height="3" rx="1.5" fill="#8c8c8c"/>
      <rect x="21" y="9.5" width="47" height="3" rx="1.5" fill="#1a66cc"/>
      <circle cx="78.5" cy="11" r="3" fill="#8c8c8c"/>
      <circle cx="67.5" cy="11" r="5.5" fill="#1a66cc"/>
      <circle cx="148.3" cy="10.5" r="5.5" fill="#8a8a8a"/><rect x="145" y="10" width="6.6" height="1.4" fill="#484848"/><rect x="147.6" y="7.2" width="1.4" height="6.6" fill="#484848"/>
    </svg>
</body></html>
